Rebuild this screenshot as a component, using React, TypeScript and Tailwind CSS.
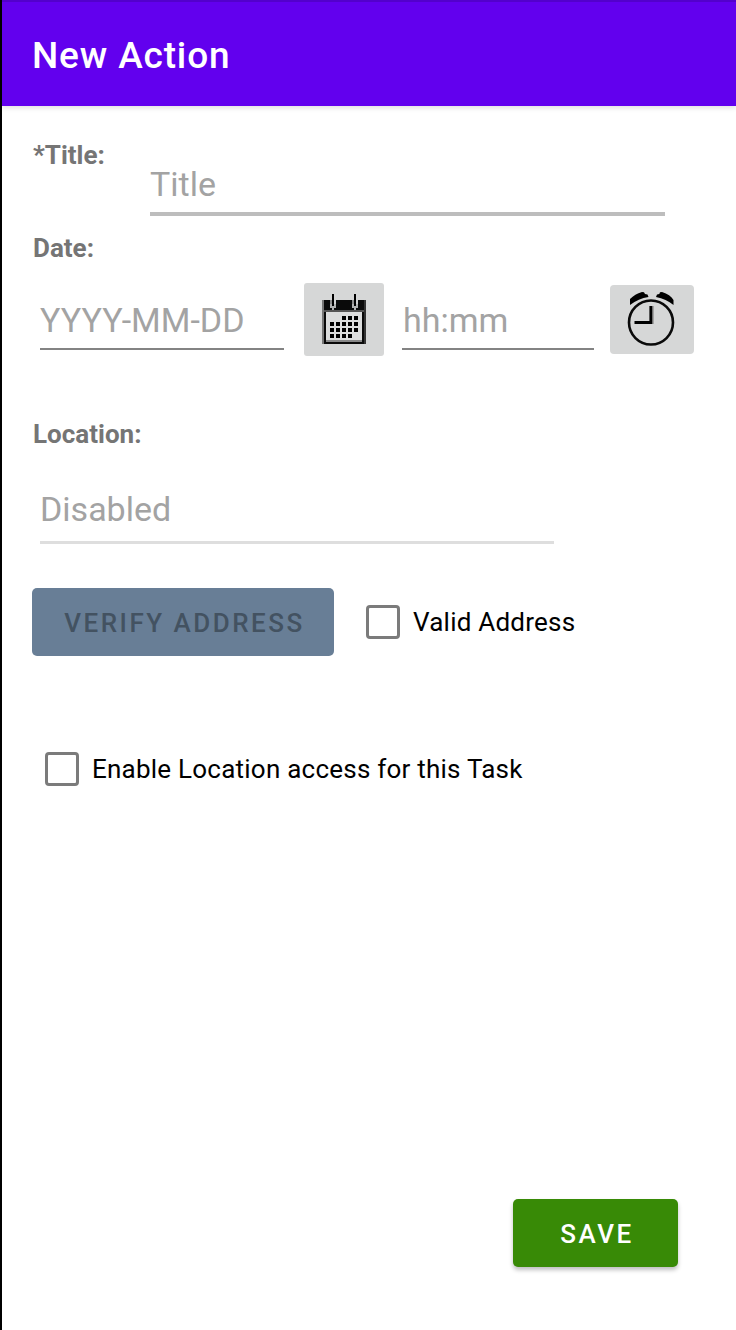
import React from "react";

const DOTS: [number, number][] = [
  [20, 33], [26, 33], [32, 33],
  [8, 39], [14, 39], [20, 39], [26, 39], [32, 39],
  [8, 45], [14, 45], [20, 45], [26, 45], [32, 45],
  [8, 51], [14, 51], [20, 51], [26, 51],
];

function CalendarIcon() {
  return (
    <svg width="80" height="73" viewBox="0 0 80 73" shapeRendering="crispEdges">
      <rect x="18" y="17" width="44" height="44" fill="#0a0a0a" />
      <rect x="18" y="17" width="2" height="44" fill="#777" />
      <rect x="60" y="17" width="2" height="44" fill="#333" />
      <rect x="20" y="27" width="40" height="2" fill="#555" />
      <rect x="22" y="29" width="36" height="28" fill="#dcdddd" />
      <rect x="22" y="57" width="36" height="2" fill="#888" />
      {[29, 51].map((x) => (
        <g key={x}>
          <rect x={x - 3} y="17" width="2" height="6" fill="#8c8c8c" />
          <rect x={x + 1} y="17" width="2" height="6" fill="#d0d1d1" />
          <rect x={x - 3} y="21" width="6" height="4" fill="#b0b1b1" />
          <rect x={x - 1} y="25" width="2" height="2" fill="#b0b1b1" />
          <rect x={x - 1} y="11" width="2" height="12" fill="#000" />
        </g>
      ))}
      {DOTS.map(([x, y]) => (
        <rect key={x + "-" + y} x={x + 18} y={y} width="4" height="4" fill="#000" />
      ))}
    </svg>
  );
}

function ClockIcon() {
  return (
    <svg width="84" height="69" viewBox="0 0 84 69" fill="none">
      <circle cx="41" cy="37.500" r="22" stroke="#0a0a0a" strokeWidth="2.600" />
      <path d="M41 21v16.500H24.500" stroke="#000" strokeWidth="3.200" />
      <path d="M43.200 21v18" stroke="#999" strokeWidth="1.200" />
      <path d="M20 20V14c3.500-3.500 7-5.500 12-7l2 .3 1 1.700 2.500.5 1 2.500c-7 1-12.500 3.500-18.500 8z" fill="#000" />
      <path d="M63.500 20V15c-2-3.500-6-6.500-11.500-8l-2 .3-.7 1.700-2.300.5-1 2.500c7 1.500 12.500 4 17.500 8z" fill="#000" />
    </svg>
  );
}

function Checkbox({ label }: { label: string }) {
  return (
    <label className="flex items-center gap-[13px]">
      <span className="h-[34px] w-[34px] rounded-[4px] border-[3.5px] border-[#7b7b7b]" />
      <span className="text-[26px] leading-[34px] tracking-[0.23px] whitespace-nowrap text-black">{label}</span>
    </label>
  );
}

function Label({ children }: { children: React.ReactNode }) {
  return <span className="pl-px text-[26px] leading-[32px] font-bold whitespace-nowrap text-[#757575]">{children}</span>;
}

export default function App() {
  return (
    <div className="flex h-[1330px] w-[736px] flex-col border-l-2 border-black bg-white font-['Roboto',sans-serif]">
      <header className="flex h-[106px] shrink-0 items-center border-t-2 border-[#5300cc] bg-[#6200ee] pt-[3px] pl-[30px] shadow-[0_2px_5px_rgba(0,0,0,0.12)]">
        <h1 className="text-[37px] leading-[44px] font-medium tracking-[0.85px] text-white">New Action</h1>
      </header>

      <main className="flex grow flex-col pl-[30px]">
        <section className="flex h-[110px] pt-[33px]">
          <div className="w-[118px]"><Label>*Title:</Label></div>
          <div className="mt-[23px] h-[54px] w-[515px] border-b-4 border-[#bdbdbd] text-[34px] leading-[44px] text-[#a3a3a3]">Title</div>
        </section>

        <section className="pt-4">
          <Label>Date:</Label>
        </section>
        <section className="mt-[19px] flex h-[73px] pl-2">
          <div className="mt-[15px] h-[52px] w-[244px] border-b-2 border-[#838383] text-[34px] leading-[44px] text-[#a3a3a3]">YYYY-MM-DD</div>
          <button className="ml-5 h-[73px] w-20 rounded-[3px] bg-[#d6d7d7]"><CalendarIcon /></button>
          <div className="mt-[15px] ml-[18px] h-[52px] w-[192px] border-b-2 border-[#838383] pl-px text-[34px] leading-[44px] text-[#a3a3a3]">hh:mm</div>
          <button className="mt-[2px] ml-4 h-[69px] w-[84px] rounded-[4px] bg-[#d6d7d7]"><ClockIcon /></button>
        </section>

        <section className="mt-[62px] flex flex-col">
          <Label>Location:</Label>
          <div className="mt-[37px] ml-2 h-[57px] w-[514px] border-b-[3px] border-[#dedede] text-[34px] leading-[44px] text-[#a3a3a3]">Disabled</div>
        </section>

        <section className="mt-11 flex h-[68px] items-center">
          <button className="h-[68px] w-[302px] rounded-[5px] bg-[#687e96] pt-[2px] pl-[3px] text-[26px] font-medium tracking-[2.5px] whitespace-nowrap text-[#435261]">VERIFY ADDRESS</button>
          <div className="ml-8"><Checkbox label="Valid Address" /></div>
        </section>

        <section className="mt-24 pl-[13px]">
          <Checkbox label="Enable Location access for this Task" />
        </section>

        <footer className="mt-auto flex justify-end pr-[58px] pb-[63px]">
          <button className="h-[68px] w-[165px] rounded-[5px] bg-[#388a06] pt-[2px] pl-[3px] text-[26px] font-medium tracking-[2.5px] text-white shadow-[0_3px_4px_rgba(0,0,0,0.25)]">SAVE</button>
        </footer>
      </main>
    </div>
  );
}
